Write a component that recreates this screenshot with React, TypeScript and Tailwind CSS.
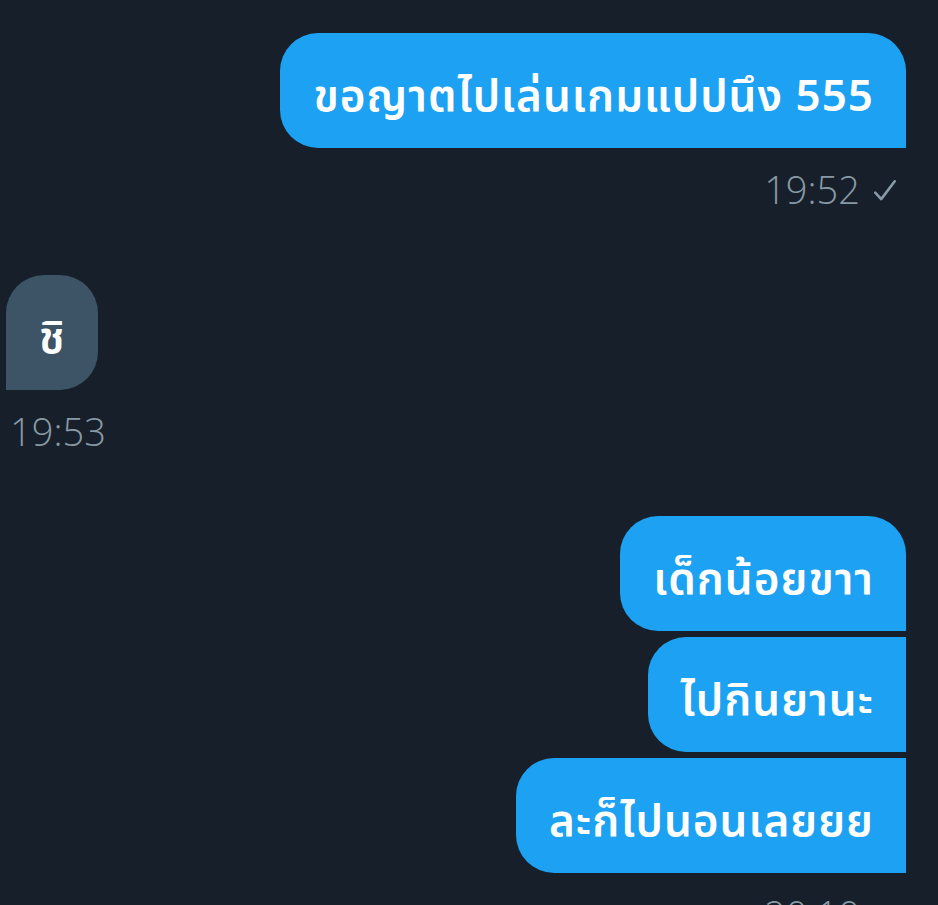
import { ReactNode } from "react";

type Side = "me" | "them";

interface Msg {
	text: string;
	corner: string;
}

function Check() {
	return (
		<svg width="26" height="26" viewBox="0 0 24 24" className="ml-3 mb-2">
			<path
				d="M3 13.5 L8.5 19.5 L21 3"
				fill="none"
				stroke="#8899a6"
				strokeWidth="2.4"
				strokeLinecap="round"
				strokeLinejoin="round"
			/>
		</svg>
	);
}

function Bubble({ side, corner, children }: { side: Side; corner: string; children: ReactNode }) {
	const color = side === "me" ? "bg-[#1da1f2]" : "bg-[#3d5466]";
	return (
		<div
			className={`${color} ${corner} pl-[33px] pr-[32px] pt-[35px] pb-[27px] text-[44px] leading-[53px] tracking-[1px] font-semibold text-white whitespace-nowrap`}
		>
			{children}
		</div>
	);
}

function Time({ side, children, read }: { side: Side; children: ReactNode; read?: boolean }) {
	return (
		<div
			className={`flex items-end text-[#8899a6] text-[38px] leading-[46px] ${
				side === "me" ? "justify-end pr-[8px]" : "justify-start pl-[4px]"
			}`}
			style={{ fontFamily: '"Open Sans", "Noto Sans", sans-serif', fontWeight: 350 }}
		>
			<span>{children}</span>
			{read && <Check />}
		</div>
	);
}

const group: Msg[] = [
	{ text: "เด็กน้อยขาา", corner: "rounded-l-[38px] rounded-tr-[38px]" },
	{ text: "ไปกินยานะ", corner: "rounded-l-[38px]" },
	{ text: "ละก็ไปนอนเลยยย", corner: "rounded-l-[38px]" },
];

export default function App() {
	return (
		<div
			className="w-[938px] h-[905px] overflow-hidden bg-[#17202a] flex flex-col"
			style={{ fontFamily: '"Noto Sans", "Noto Sans Thai", sans-serif' }}
		>
			<div className="flex flex-col items-end pr-[32px] pt-[33px]">
				<Bubble side="me" corner="rounded-l-[38px] rounded-tr-[38px]">
					ขอญาตไปเล่นเกมแปปนึง 555
				</Bubble>
			</div>
			<div className="pr-[32px] mt-[18px]">
				<Time side="me" read>
					19:52
				</Time>
			</div>

			<div className="flex flex-col items-start pl-[6px] mt-[63px]">
				<Bubble side="them" corner="rounded-r-[38px] rounded-tl-[38px]">
					ชิ
				</Bubble>
			</div>
			<div className="pl-[6px] mt-[18px]">
				<Time side="them">19:53</Time>
			</div>

			<div className="flex flex-col items-end gap-[6px] pr-[32px] mt-[62px]">
				{group.map((m) => (
					<Bubble key={m.text} side="me" corner={m.corner}>
						{m.text}
					</Bubble>
				))}
			</div>
			<div className="pr-[32px] mt-[18px]">
				<Time side="me" read>
					20:10
				</Time>
			</div>
		</div>
	);
}
